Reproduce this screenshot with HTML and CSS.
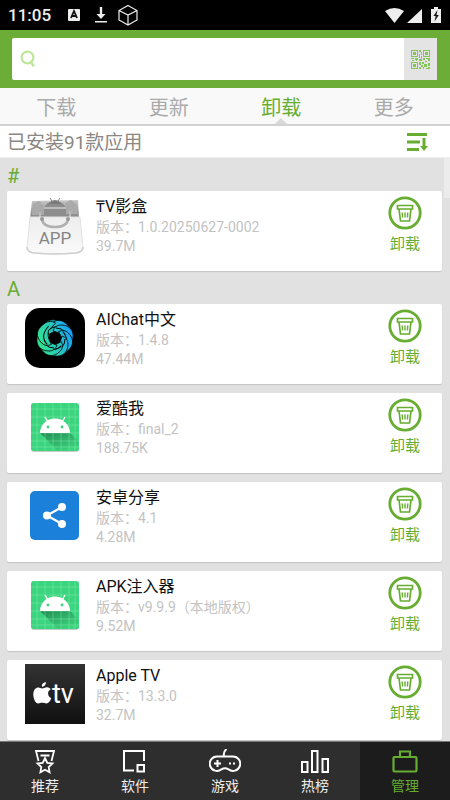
FILE: index.html
```html
<!DOCTYPE html>
<html lang="zh-CN">
  <head>
    <meta charset="UTF-8">
    <meta name="viewport" content="width=device-width, initial-scale=1">
    <title>应用管理</title>
    <link rel="stylesheet" href="styles.css">
  </head>
  <body>
  <svg class="defs" width="0" height="0" aria-hidden="true">
    <defs>
      <linearGradient id="shade" x1="0" y1="0" x2=".7" y2="1"><stop offset="0" stop-color="#228b52"/><stop offset="1" stop-color="#3bd57f"/></linearGradient>
    </defs>
    <symbol id="trash" viewBox="0 0 34 34">
      <circle cx="17" cy="17" r="15.2" fill="none" stroke="#67ad31" stroke-width="2.800"/>
      <path d="M9.500 9.500h15v3.500h-15zM11 13l1.500 12h9L23 13" fill="none" stroke="#67ad31" stroke-width="1.700"/>
      <path d="M14.200 16.500l.4 5M17 16.500v5M19.800 16.500l-.4 5" stroke="#67ad31" stroke-width="1.400"/>
    </symbol>
    <symbol id="droid" viewBox="0 0 60 60">
      <rect x="6" y="7" width="48" height="48" rx="3" fill="#c5ccc8"/>
      <rect x="6" y="6" width="48" height="48" rx="3" fill="#3bd57f"/>
      <path d="M15 36h30l9 9v6q0 3-3 3H33z" fill="url(#shade)"/>
      <path d="M12 6v48M20 6v48M28 6v48M36 6v48M44 6v48M50 6v48M6 12h48M6 20h48M6 28h48M6 36h48M6 44h48M6 50h48" stroke="#8cf0b5" stroke-opacity=".6" stroke-width=".7"/>
      <path d="M15 36a15 14.500 0 0 1 30 0z" fill="#fff"/>
      <path d="M23 25l-3-5M37 25l3-5" stroke="#fff" stroke-width="1.400"/>
      <circle cx="23" cy="30" r="1.400" fill="#3bd57f"/>
      <circle cx="37" cy="30" r="1.400" fill="#3bd57f"/>
    </symbol>
  </svg>

  <div class="status">
    <span class="clock">11:05</span>
    <svg class="status-left" width="72" height="22" viewBox="0 0 72 22">
      <rect x="1" y="5" width="12" height="12" rx="1" fill="#eee"/>
      <path d="M4 14l3-7 3 7M5 12h4" fill="none" stroke="#111" stroke-width="1.800"/>
      <path d="M34 3v9" stroke="#eee" stroke-width="2.400"/>
      <path d="M29.500 10h9L34 15zM28 17h12v1.500H28z" fill="#eee"/>
      <path d="M61 1.500l9 5v9.500l-9 5-9-5V6.500zM52 6.500l9 4.500 9-4.500M61 11v10" fill="none" stroke="#eee" stroke-width="1.200"/>
    </svg>
    <svg class="status-right" width="58" height="18" viewBox="0 0 58 18">
      <path d="M1 5q9.500-6 19 0L10.500 17z" fill="#eee"/>
      <path d="M38 3v14H23z" fill="#eee"/>
      <path d="M47 3h3V1h4v2h3v14H47z" fill="#eee"/>
      <path d="M53.500 4l-4 6h2.200L50.500 15.500l4.300-6.500h-2.300z" fill="#111"/>
    </svg>
  </div>

  <form class="search">
    <label class="search-box">
      <svg width="16" height="18" viewBox="0 0 16 18">
        <circle cx="7.500" cy="7.500" r="5.900" fill="none" stroke="#bde89b" stroke-width="2.200"/>
        <path d="M10 11l4 5.500" stroke="#bde89b" stroke-width="2.400"/>
      </svg>
      <input type="search" aria-label="搜索">
    </label>
    <button type="button" class="scan" aria-label="扫一扫">
      <svg width="19" height="19" viewBox="0 0 19 19" fill="#84c558">
        <path fill-rule="evenodd" d="M0 0h7v7H0zM1 1v5h5V1zM12 0h7v7h-7zM13 1v5h5V1zM0 12h7v7H0zM1 13v5h5v-5z"/>
        <path d="M2 2h3v3H2zM14 2h3v3h-3zM2 14h3v3H2zM8 0h2v2H8zM10 2h1v3h-1zM8 4h1v4H8zM0 8h3v1H0zM4 8h3v2H4zM1 10h2v1H1zM8 9h3v2H8zM10 6h1v3h-1zM12 8h2v2h-2zM15 8h4v1h-4zM17 9h2v2h-2zM14 11h2v1h-2zM8 12h2v3H8zM11 12h2v2h-2zM10 15h2v2h-2zM8 17h2v2H8zM13 14h3v3h-3zM17 13h2v3h-2zM12 17h1v2h-1zM15 18h4v1h-4zM17 17h2v1h-2zM5 10h1v1H5z"/>
      </svg>
    </button>
  </form>

  <nav class="tabs">
    <a href="#download">下载</a>
    <a href="#update">更新</a>
    <a href="#uninstall" class="current">卸载</a>
    <a href="#more">更多</a>
  </nav>

  <div class="summary">
    <h1>已安装91款应用</h1>
    <button type="button" class="sort" aria-label="排序">
      <svg width="21" height="18" viewBox="0 0 21 18" fill="#67ad31">
        <path d="M0 0h20v3H0zM0 7.500h13v3H0zM0 15h12v3H0zM15.500 5h3v8h2.500l-4 5-4-5h2.500z"/>
      </svg>
    </button>
  </div>

  <main class="list">
    <h2>#</h2>
    <ul>
      <li class="card">
        <svg class="icon" viewBox="0 0 60 60">
          <defs>
            <linearGradient id="bag" x2="0" y2="1"><stop offset="0" stop-color="#ededed"/><stop offset="1" stop-color="#fafafa"/></linearGradient>
            <linearGradient id="bagtop" x2="0" y2="1"><stop offset="0" stop-color="#c8c8c8"/><stop offset="1" stop-color="#858585"/></linearGradient>
          </defs>
          <path d="M7 6l46-1 1 18H5z" fill="url(#bagtop)"/>
          <path d="M8 9l6-3 5 5 3 9H7zM40 8l6-3 6 5v9H41z" fill="#aaa"/>
          <path d="M19 22v-9q2-6 11-7 9 1 11 7v9z" fill="#8d8d8d"/>
          <path d="M23 9q7-7 14 0zM25 3l2 3M35 3l-2 3" fill="#777" stroke="#888"/>
          <path d="M19 13h22M15 17v5M45 16v6" stroke="#bbb" stroke-width="2"/>
          <path d="M5 22h50l3 31q0 4-7 5-21 2-42 0-7-1-7-5z" fill="url(#bag)" stroke="#e2e2e2"/>
          <path d="M2 52q0 5 7 6 21 2 42 0 7-1 7-6" fill="none" stroke="#d0d0d0" stroke-width="1.500"/>
          <path d="M17 24q1 8 13 8t13-8" fill="none" stroke="#b0b0b0" stroke-width="2.500"/>
          <circle cx="17" cy="24" r="2" fill="#999"/><circle cx="43" cy="24" r="2" fill="#999"/>
          <text x="30" y="49" text-anchor="middle" font-size="17" fill="#858585">APP</text>
        </svg>
        <div class="info">
          <h3>₸V影盒</h3>
          <p>版本：1.0.20250627-0002</p>
          <p>39.7M</p>
        </div>
        <button type="button" class="remove"><svg width="34" height="34"><use href="#trash"/></svg>卸载</button>
      </li>
    </ul>
    <h2>A</h2>
    <ul>
      <li class="card">
        <svg class="icon" viewBox="0 0 60 60">
          <defs>
            <linearGradient id="swirl" gradientUnits="userSpaceOnUse" x1="12" y1="36" x2="48" y2="24"><stop offset="0" stop-color="#35e58b"/><stop offset=".5" stop-color="#27c8bd"/><stop offset="1" stop-color="#159cff"/></linearGradient>
            <mask id="petals">
              <g id="petal">
                <path d="M17 24C17 15 23 11 30 12C36 12 40 15 41 20L31 20Q25 23 23 32Q17 30 17 24z" fill="#fff" stroke="#000" stroke-width=".8"/>
                <path d="M20 29Q20 18 34 17" fill="none" stroke="#000" stroke-width="1"/>
              </g>
              <use href="#petal" transform="rotate(45 30 30)"/>
              <use href="#petal" transform="rotate(90 30 30)"/>
              <use href="#petal" transform="rotate(135 30 30)"/>
              <use href="#petal" transform="rotate(180 30 30)"/>
              <use href="#petal" transform="rotate(225 30 30)"/>
              <use href="#petal" transform="rotate(270 30 30)"/>
              <use href="#petal" transform="rotate(315 30 30)"/>
            </mask>
          </defs>
          <rect width="60" height="60" rx="15" fill="#000"/>
          <rect width="60" height="60" fill="url(#swirl)" mask="url(#petals)"/>
        </svg>
        <div class="info">
          <h3>AIChat中文</h3>
          <p>版本：1.4.8</p>
          <p>47.44M</p>
        </div>
        <button type="button" class="remove"><svg width="34" height="34"><use href="#trash"/></svg>卸载</button>
      </li>
      <li class="card">
        <svg class="icon"><use href="#droid"/></svg>
        <div class="info">
          <h3>爱酷我</h3>
          <p>版本：final_2</p>
          <p>188.75K</p>
        </div>
        <button type="button" class="remove"><svg width="34" height="34"><use href="#trash"/></svg>卸载</button>
      </li>
      <li class="card">
        <svg class="icon" viewBox="0 0 60 60">
          <rect x="5" y="5" width="49" height="49" rx="5" fill="#1a80da"/>
          <path d="M37 21L22 29.500 37 38" fill="none" stroke="#fff" stroke-width="2.200"/>
          <circle cx="37" cy="21" r="4" fill="#fff"/><circle cx="22" cy="29.500" r="4" fill="#fff"/><circle cx="37" cy="38" r="4" fill="#fff"/>
        </svg>
        <div class="info">
          <h3>安卓分享</h3>
          <p>版本：4.1</p>
          <p>4.28M</p>
        </div>
        <button type="button" class="remove"><svg width="34" height="34"><use href="#trash"/></svg>卸载</button>
      </li>
      <li class="card">
        <svg class="icon"><use href="#droid"/></svg>
        <div class="info">
          <h3>APK注入器</h3>
          <p>版本：v9.9.9（本地版权）</p>
          <p>9.52M</p>
        </div>
        <button type="button" class="remove"><svg width="34" height="34"><use href="#trash"/></svg>卸载</button>
      </li>
      <li class="card">
        <svg class="icon" viewBox="0 0 60 60">
          <defs><linearGradient id="tv" x2="0" y2="1"><stop offset="0" stop-color="#333"/><stop offset="1" stop-color="#101010"/></linearGradient></defs>
          <rect width="60" height="60" fill="url(#tv)"/>
          <path d="M17 23q-1-4 4-5 0 4-4 5zM17 24.500c2 0 3-1.500 5-1.300 2 .2 3 1 3.700 2-4 2-3 7.500.6 8.800-1 3-3 5.500-5 5.500-1.500 0-2-.7-4-.7s-2.500.7-4 .7c-3 0-5-5-5-9 0-4.500 2.500-7 5-7 1.500 0 2.500 1 3.700 1z" fill="#fff"/>
          <text x="27" y="39" font-size="27" fill="#fff">tv</text>
        </svg>
        <div class="info">
          <h3>Apple TV</h3>
          <p>版本：13.3.0</p>
          <p>32.7M</p>
        </div>
        <button type="button" class="remove"><svg width="34" height="34"><use href="#trash"/></svg>卸载</button>
      </li>
    </ul>
    <span class="thumb"></span>
  </main>

  <nav class="bottom">
    <a href="#recommend">
      <svg width="32" height="26" viewBox="0 0 32 26" fill="none" stroke="#fff" stroke-width="1.800">
        <path d="M9.500 12L7 2h18l-2.500 10M11.500 6.500h9"/>
        <path d="M16 9l2.300 4.800 5.200.7-3.800 3.600.9 5.200-4.600-2.500-4.600 2.500.9-5.200-3.800-3.600 5.200-.7z"/>
      </svg>
      推荐
    </a>
    <a href="#software">
      <svg width="32" height="26" viewBox="0 0 32 26" fill="none" stroke="#fff" stroke-width="2">
        <path d="M15 21.500H5V2h20v10"/>
        <rect x="18.500" y="16" width="6.500" height="6.500"/>
      </svg>
      软件
    </a>
    <a href="#games">
      <svg width="32" height="26" viewBox="0 0 32 26" fill="none" stroke="#fff" stroke-width="2">
        <path d="M8 7.500h16a7.200 7.200 0 1 1-4.500 12.800q-3.500-2-7 0A7.200 7.200 0 1 1 8 7.500zM15 7q-1-4 2.500-7M5 14.500h7M8.500 11v7"/>
        <path d="M20 14.500h2M24 14.500h2"/>
      </svg>
      游戏
    </a>
    <a href="#hot">
      <svg width="32" height="26" viewBox="0 0 32 26" fill="none" stroke="#fff" stroke-width="2">
        <rect x="3" y="13" width="5.500" height="10"/>
        <rect x="13" y="2" width="5.500" height="21"/>
        <rect x="23.500" y="10" width="5.500" height="13"/>
      </svg>
      热榜
    </a>
    <a href="#manage" class="current">
      <svg width="32" height="26" viewBox="0 0 32 26" fill="none" stroke="#67ad31" stroke-width="2.200">
        <rect x="4.500" y="8" width="23" height="14.500" rx="1"/>
        <path d="M11 8V2.500h10V8"/>
      </svg>
      管理
    </a>
  </nav>
  </body>
</html>
```
FILE: styles.css
```css
* {
    box-sizing: border-box;
}

body {
    margin: 0;
    height: 100vh;
    display: flex;
    flex-direction: column;
    background: #e1e1e1;
    font-family: Roboto, "Noto Sans CJK SC", sans-serif;
}

h1, h2, h3, p, ul {
    margin: 0;
    padding: 0;
    font-weight: normal;
}

a {
    color: inherit;
    text-decoration: none;
}

button {
    border: 0;
    padding: 0;
    background: none;
    font-family: inherit;
}

svg {
    display: block;
}

.defs {
    position: absolute;
}

.status {
    flex: none;
    display: flex;
    align-items: center;
    height: 30px;
    padding: 0 8px;
    background: #000;
    color: #eee;
}

.clock {
    font-size: 17px;
    font-weight: 500;
}

.status-left {
    margin-left: 16px;
}

.status-right {
    margin-left: auto;
}

.search {
    flex: none;
    display: flex;
    height: 58px;
    padding: 8px 13px 8px 12px;
    background: #6cad37;
}

.search-box {
    flex: 1;
    display: flex;
    align-items: center;
    gap: 8px;
    padding: 0 8px;
    background: #fff;
    border-radius: 2px 0 0 2px;
}

.search-box input {
    flex: 1;
    min-width: 0;
    border: 0;
    outline: 0;
    background: none;
    font-size: 16px;
}

.scan {
    display: flex;
    align-items: center;
    justify-content: center;
    width: 33px;
    background: #e4e4e4;
}

.tabs {
    flex: none;
    display: flex;
    height: 38px;
    border-bottom: 2px solid #d2d2d2;
    background: #f9f9f9;
}

.tabs a {
    position: relative;
    flex: 1;
    text-align: center;
    font-size: 20px;
    line-height: 40px;
    color: #aaa;
}

.tabs .current {
    color: #67ad31;
}

/* arrow that ties the open tab to its panel */
.tabs .current::after {
    content: "";
    position: absolute;
    left: 50%;
    bottom: 0;
    margin-left: -6px;
    border: 6px solid transparent;
    border-top: 0;
    border-bottom-color: #d8d8d8;
}

.summary {
    flex: none;
    display: flex;
    align-items: center;
    justify-content: space-between;
    height: 32px;
    padding: 0 22px 0 7px;
    border-bottom: 1px solid #eee;
    background: #fff;
}

.summary h1 {
    padding-top: 2px;
    font-size: 19px;
    line-height: 30px;
    color: #8b8782;
}

.list {
    position: relative;
    flex: 1;
    min-height: 0;
    overflow: hidden;
    padding: 0 8px 0 7px;
}

.list h2 {
    height: 33px;
    font-size: 20px;
    line-height: 36px;
    color: #67ad31;
}

.list ul {
    display: flex;
    flex-direction: column;
    gap: 9px;
    list-style: none;
}

.card {
    display: flex;
    align-items: flex-start;
    height: 80px;
    padding: 4px 20px 0 18px;
    border-radius: 2px;
    background: #fff;
    box-shadow: 0 1px 1px #c4c4c4;
}

.icon {
    flex: none;
    width: 60px;
    height: 60px;
}

.info {
    flex: 1;
    padding: 1px 0 0 11px;
}

.info h3 {
    font-size: 16px;
    line-height: 22px;
    color: #111;
}

.info p {
    font-size: 14px;
    line-height: 19px;
    color: #c3c3c3;
}

.remove {
    display: flex;
    flex-direction: column;
    align-items: center;
    gap: 2px;
    padding-top: 1px;
    font-size: 15px;
    line-height: 24px;
    color: #67ad31;
}

/* scroll position marker */
.thumb {
    position: absolute;
    top: 0;
    right: 0;
    width: 6px;
    height: 40px;
    background: #ececec;
}

.bottom {
    flex: none;
    display: flex;
    height: 59px;
    border-top: 1px solid #777;
    background: #2e2e2e;
    color: #eee;
}

.bottom a {
    flex: 1;
    display: flex;
    flex-direction: column;
    align-items: center;
    padding-top: 7px;
    font-size: 14px;
    line-height: 22px;
}

.bottom .current {
    background: #1c1c1c;
    color: #67ad31;
}
```
